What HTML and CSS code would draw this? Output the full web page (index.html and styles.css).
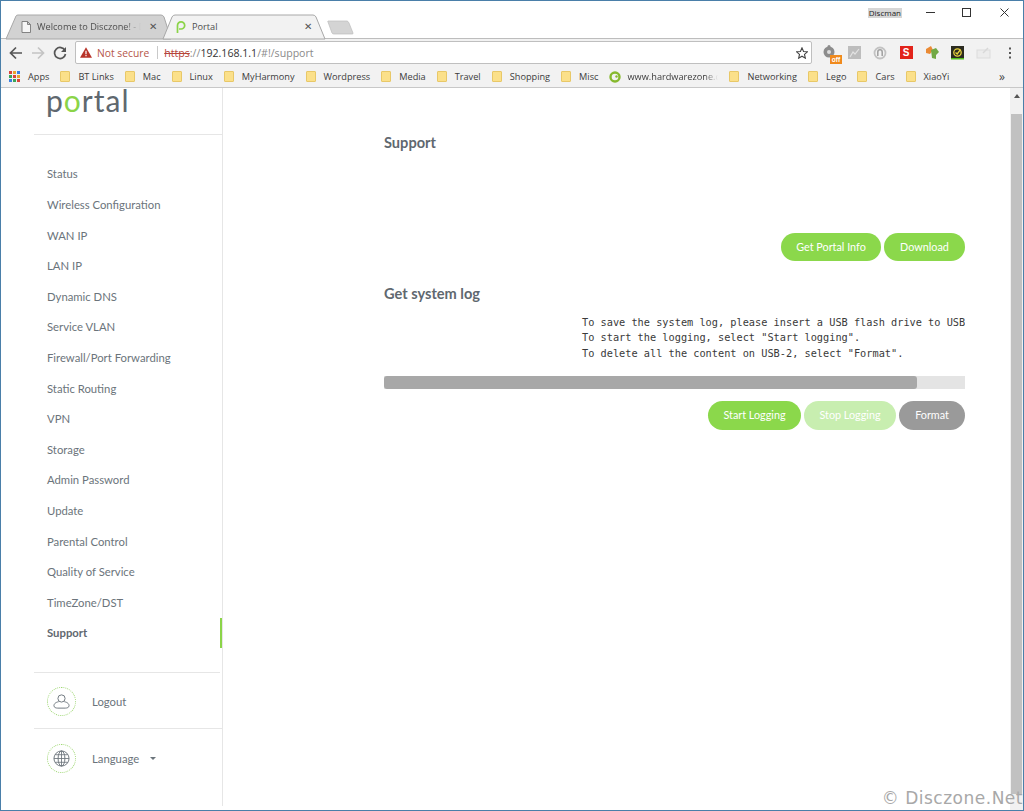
FILE: index.html
```html
<!DOCTYPE html>
<html lang="en">
<head>
<meta charset="utf-8">
<title>Portal</title>
<link rel="stylesheet" href="styles.css">
</head>
<body>
<div class="window">
  <header class="titlebar">
    <div class="tabs">
      <div class="tab tab-back">
        <svg class="tab-shape" viewBox="0 0 165 24" preserveAspectRatio="none"><path d="M0 24 L10 1 Q10.500 0 12 0 L155 0 Q157 0 158 2 L165 24 Z" fill="#d2d2d2" stroke="#a8a8a8"/></svg>
        <svg class="favicon" viewBox="0 0 10 12"><path d="M1 .5H6.500L9.500 3.500V11.500H1Z M6.500 .5V3.500H9.500" fill="#f6f6f6" stroke="#777" stroke-width=".9"/></svg>
        <span class="tab-title fade">Welcome to Disczone! - Di</span>
        <span class="tab-close">✕</span>
      </div>
      <div class="tab tab-front">
        <svg class="tab-shape" viewBox="0 0 163 24" preserveAspectRatio="none"><path d="M0 24 L9 2 Q10 0 12 0 L150 0 Q152 0 153 2 L162 24 Z" fill="#f2f2f2" stroke="#a8a8a8"/></svg>
        <svg class="favicon favicon-p" viewBox="0 0 12 14"><path d="M2.500 13V5.500A3.600 3.600 0 1 1 6 9H4" fill="none" stroke="#8bd448" stroke-width="1.700"/></svg>
        <span class="tab-title">Portal</span>
        <span class="tab-close">✕</span>
      </div>
      <svg class="newtab" viewBox="0 0 27 15"><path d="M1 1H20Q21 1 22 3L26 13Q26.500 14 25 14H7Q5.500 14 5 13L1 2Q.5 1 1 1Z" fill="#d4d4d4" stroke="#bbb" stroke-width=".7"/></svg>
    </div>
    <div class="winctl">
      <span class="profile">Discman</span>
      <svg class="wc wc-min" viewBox="0 0 9 9"><path d="M0 4.500H9" stroke="#333" stroke-width="1"/></svg>
      <svg class="wc wc-max" viewBox="0 0 9 9"><rect x=".5" y=".5" width="8" height="8" fill="none" stroke="#333"/></svg>
      <svg class="wc wc-close" viewBox="0 0 9 9"><path d="M.5 .5L8.500 8.500M8.500 .5L.5 8.500" stroke="#333" stroke-width="1"/></svg>
    </div>
  </header>

  <div class="toolbar">
    <svg class="nav-ic" viewBox="0 0 14 14"><path d="M13 7H2M7 1.500L1.500 7L7 12.500" fill="none" stroke="#555" stroke-width="1.700"/></svg>
    <svg class="nav-ic" viewBox="0 0 14 14"><path d="M1 7H12M7 1.500L12.500 7L7 12.500" fill="none" stroke="#c4c4c4" stroke-width="1.700"/></svg>
    <svg class="nav-ic" viewBox="0 0 14 14"><path d="M12 4.500A5.500 5.500 0 1 0 12.500 8" fill="none" stroke="#555" stroke-width="1.700"/><path d="M13 1V6H8Z" fill="#555"/></svg>
    <div class="omnibox">
      <svg class="warn" viewBox="0 0 14 12"><path d="M7 0L14 12H0Z" fill="#b8342a"/><path d="M6.300 4H7.700V8H6.300ZM6.300 9H7.700V10.400H6.300Z" fill="#fff"/></svg>
      <span class="notsecure">Not secure</span>
      <span class="sep"></span>
      <span class="url"><s class="https">https</s><span class="dim">://</span><span class="host">192.168.1.1</span><span class="dim">/#!/support</span></span>
      <svg class="star" viewBox="0 0 14 14"><path d="M7 1L8.800 5.200L13.300 5.600L9.900 8.600L10.900 13L7 10.700L3.100 13L4.100 8.600L.7 5.600L5.200 5.200Z" fill="none" stroke="#444" stroke-width="1.300"/></svg>
    </div>
    <div class="exts">
      <span class="ext">
        <svg viewBox="0 0 18 18"><circle cx="10" cy="8" r="5.500" fill="#8c8c8c"/><circle cx="10" cy="2.500" r="1.500" fill="#8c8c8c"/><circle cx="10" cy="8" r="2" fill="#ddd"/></svg>
        <span class="off-badge">off</span>
      </span>
      <span class="ext"><svg viewBox="0 0 18 18"><rect x="3" y="2" width="13" height="13" fill="#bdbdbd"/><path d="M5 13L8 8L10 10L14 5" fill="none" stroke="#e3e3e3" stroke-width="1.200"/></svg></span>
      <span class="ext"><svg viewBox="0 0 18 18"><circle cx="9" cy="9" r="5.500" fill="none" stroke="#c2c2c2" stroke-width="1.800"/><path d="M6.800 12V8A2.200 2.200 0 0 1 11.200 8V12" fill="none" stroke="#9f9f9f" stroke-width="1.500"/></svg></span>
      <span class="ext"><span class="ext-s">S</span></span>
      <span class="ext"><svg viewBox="0 0 18 18"><path d="M3 5L8 2L10 6L7 10L3 9Z" fill="#ea8a35"/><path d="M8 6L13 4L16 8L13 11L13 15L9 14Z" fill="#72a945"/></svg></span>
      <span class="ext"><svg viewBox="0 0 18 18"><rect x="2" y="2" width="13" height="13" fill="#2b2b20"/><rect x="2" y="14" width="13" height="1.500" fill="#52c01e"/><circle cx="8.500" cy="8.500" r="3.700" fill="none" stroke="#e8d23c" stroke-width="1.300"/><path d="M6.500 8.500L8.200 10L11.500 5.500" fill="none" stroke="#e8d23c" stroke-width="1.300"/></svg></span>
      <span class="ext"><svg viewBox="0 0 18 18"><rect x="2" y="6" width="13" height="8" fill="#ececec" stroke="#dcdcdc"/><path d="M8 9L13 4" stroke="#d8d8d8" stroke-width="1.500"/></svg></span>
      <span class="ext"><svg viewBox="0 0 18 18"><path d="M9 3.500V5.500M9 8V10M9 12.500V14.500" stroke="#555" stroke-width="2"/></svg></span>
    </div>
  </div>

  <div class="bookmarks">
    <span class="bm bm-apps">
      <svg class="apps-ic" viewBox="0 0 11 11"><rect width="3" height="3" fill="#d9453a"/><rect x="4" width="3" height="3" fill="#e9a52e"/><rect x="8" width="3" height="3" fill="#3c7fe0"/><rect y="4" width="3" height="3" fill="#3aa757"/><rect x="4" y="4" width="3" height="3" fill="#d9453a"/><rect x="8" y="4" width="3" height="3" fill="#e9a52e"/><rect y="8" width="3" height="3" fill="#3c7fe0"/><rect x="4" y="8" width="3" height="3" fill="#3aa757"/><rect x="8" y="8" width="3" height="3" fill="#d9453a"/></svg>
      Apps
    </span>
    <span class="bm"><i class="folder"></i>BT Links</span>
    <span class="bm"><i class="folder"></i>Mac</span>
    <span class="bm"><i class="folder"></i>Linux</span>
    <span class="bm"><i class="folder"></i>MyHarmony</span>
    <span class="bm"><i class="folder"></i>Wordpress</span>
    <span class="bm"><i class="folder"></i>Media</span>
    <span class="bm"><i class="folder"></i>Travel</span>
    <span class="bm"><i class="folder"></i>Shopping</span>
    <span class="bm"><i class="folder"></i>Misc</span>
    <span class="bm">
      <svg class="hz-ic" viewBox="0 0 12 12"><circle cx="6" cy="6" r="4.500" fill="none" stroke="#86b92e" stroke-width="2.400"/><circle cx="7.500" cy="5.500" r="1.200" fill="#86b92e"/></svg>
      <span class="bm-trunc fade">www.hardwarezone.com</span>
    </span>
    <span class="bm"><i class="folder"></i>Networking</span>
    <span class="bm"><i class="folder"></i>Lego</span>
    <span class="bm"><i class="folder"></i>Cars</span>
    <span class="bm"><i class="folder"></i>XiaoYi</span>
    <span class="bm-more">»</span>
  </div>

  <div class="page">
    <aside class="sidebar">
      <div class="logo">p<span class="logo-o">o</span>rtal</div>
      <nav class="menu">
        <a class="item">Status</a>
        <a class="item">Wireless Configuration</a>
        <a class="item">WAN IP</a>
        <a class="item">LAN IP</a>
        <a class="item">Dynamic DNS</a>
        <a class="item">Service VLAN</a>
        <a class="item">Firewall/Port Forwarding</a>
        <a class="item">Static Routing</a>
        <a class="item">VPN</a>
        <a class="item">Storage</a>
        <a class="item">Admin Password</a>
        <a class="item">Update</a>
        <a class="item">Parental Control</a>
        <a class="item">Quality of Service</a>
        <a class="item">TimeZone/DST</a>
        <a class="item active">Support</a>
      </nav>
      <div class="foot foot-logout">
        <span class="circle"><svg viewBox="0 0 18 16"><circle cx="9" cy="4.800" r="3.800" fill="none" stroke="#6b747b" stroke-width="1"/><path d="M6 8.200C2 9 1 11 1 12.500C1 14.300 3 15 5 15H13C15 15 17 14.300 17 12.500C17 11 16 9 12 8.200" fill="none" stroke="#6b747b" stroke-width="1"/></svg></span>
        <span>Logout</span>
      </div>
      <div class="foot foot-lang">
        <span class="circle"><svg viewBox="0 0 18 18"><circle cx="9" cy="9" r="8" fill="none" stroke="#6b747b"/><ellipse cx="9" cy="9" rx="3.600" ry="8" fill="none" stroke="#6b747b"/><path d="M1 9H17M2.200 5H15.800M2.200 13H15.800M9 1V17" stroke="#6b747b" stroke-width=".9"/></svg></span>
        <span>Language</span>
        <span class="caret"></span>
      </div>
    </aside>

    <main class="main">
      <h2 class="heading">Support</h2>
      <div class="btns btns-first">
        <button class="btn btn-info">Get Portal Info</button>
        <button class="btn btn-dl">Download</button>
      </div>
      <h2 class="heading heading-log">Get system log</h2>
      <pre class="log">To save the system log, please insert a USB flash drive to USB-2 port.
To start the logging, select "Start logging".
To delete all the content on USB-2, select "Format".</pre>
      <div class="progress"><div class="progress-fill"></div></div>
      <div class="btns btns-log">
        <button class="btn btn-start">Start Logging</button>
        <button class="btn btn-stop">Stop Logging</button>
        <button class="btn btn-format">Format</button>
      </div>
    </main>

    <div class="scrollbar">
      <span class="sb-up"></span>
      <div class="sb-thumb"></div>
    </div>
    <div class="watermark">© Disczone.Net</div>
  </div>
</div>
</body>
</html>
```

FILE: styles.css
```css
* { box-sizing: border-box; }
html, body { margin: 0; height: 100%; overflow: hidden; background: #fff; }
body { font-family: "Lato", "Liberation Sans", sans-serif; }

.window {
  width: 1024px;
  height: 811px;
  border: 1px solid #4a7fa9;
  display: flex;
  flex-direction: column;
  background: #fff;
}

/* Title bar */
.titlebar {
  height: 37px;
  flex: none;
  display: flex;
  justify-content: space-between;
  background: #fff;
  font-family: "Open Sans", "Liberation Sans", sans-serif;
}
.tabs {
  display: flex;
  align-items: flex-end;
  padding-left: 5px;
}
.tab {
  position: relative;
  height: 23px;
  display: flex;
  align-items: center;
  font-size: 9.200px;
  color: #555;
}
.tab-shape {
  position: absolute;
  left: 0;
  top: 0;
  width: 100%;
  height: 24px;
  overflow: visible;
}
.tab-back { width: 165px; padding-left: 15px; }
.tab-front { width: 163px; margin-left: -8px; padding-left: 12px; }
.favicon { position: relative; width: 10px; height: 12px; flex: none; margin-right: 6px; }
.favicon-p { width: 12px; height: 14px; margin-right: 5px; }
.tab-title {
  position: relative;
  flex: 1;
  white-space: nowrap;
  overflow: hidden;
  color: #4e4e4e;
}
.fade {
  -webkit-mask-image: linear-gradient(to right, #000 85%, transparent);
  mask-image: linear-gradient(to right, #000 85%, transparent);
}
.tab-close {
  position: relative;
  width: 10px;
  font-size: 10px;
  margin: 0 12px 0 8px;
  line-height: 1;
  color: #555;
  font-family: "DejaVu Sans", sans-serif;
}
.newtab { width: 27px; height: 15px; margin: 0 0 3px 1px; flex: none; }

.winctl {
  display: flex;
  align-items: flex-start;
  padding-top: 7px;
  padding-right: 14px;
}
.profile {
  font-size: 8px;
  line-height: 10px;
  padding: 0 1px;
  color: #222;
  background: #d6d6d6;
  margin-right: 24px;
}
.wc { width: 9px; height: 9px; flex: none; }
.wc-min { margin-right: 27px; }
.wc-max { margin-right: 29px; }

/* Toolbar */
.toolbar {
  height: 28px;
  flex: none;
  display: flex;
  align-items: center;
  background: #f2f2f2;
  border-top: 1px solid #bdbdbd;
  padding-left: 8px;
  font-family: "Open Sans", "Liberation Sans", sans-serif;
}
.nav-ic { width: 14px; height: 14px; flex: none; margin-right: 8px; }
.omnibox {
  width: 739px;
  height: 23px;
  display: flex;
  align-items: center;
  background: #fff;
  border: 1px solid #bfbfbf;
  border-radius: 2px;
  padding: 0 4px;
  font-size: 11px;
}
.warn { width: 12px; height: 11px; flex: none; margin-right: 5px; }
.notsecure { color: #b5564a; font-size: 10.300px; }
.sep { width: 1px; height: 13px; background: #c9c9c9; margin: 0 6px 0 8px; }
.url { flex: 1; white-space: nowrap; font-size: 10.600px; }
.https { color: #b5443a; }
.dim { color: #8a8a8a; }
.host { color: #333; }
.star { width: 12px; height: 12px; flex: none; margin-right: -1px; }
.exts {
  display: flex;
  margin-left: 3px;
}
.ext {
  position: relative;
  width: 26px;
  height: 22px;
  display: flex;
  align-items: center;
  justify-content: center;
}
.ext svg { width: 18px; height: 18px; }
.ext-s {
  width: 13px;
  height: 13px;
  background: #e2231a;
  color: #fff;
  font: 700 10px/13px "Liberation Sans", sans-serif;
  text-align: center;
}
.off-badge {
  position: absolute;
  right: -1px;
  bottom: 0;
  width: 12px;
  height: 9px;
  background: #f08a1d;
  color: #fff;
  font: 700 6.500px/9px "Liberation Sans", sans-serif;
  text-align: center;
}

/* Bookmarks */
.bookmarks {
  height: 22px;
  flex: none;
  display: flex;
  align-items: center;
  gap: 11px;
  padding-left: 8px;
  background: #f2f2f2;
  border-bottom: 1px solid #c8c8c8;
  font: 9.200px "Open Sans", "Liberation Sans", sans-serif;
  color: #3c3c3c;
  white-space: nowrap;
}
.bm { display: flex; align-items: center; flex: none; }
.apps-ic { width: 11px; height: 11px; margin-right: 8px; }
.hz-ic { width: 12px; height: 12px; margin-right: 6px; }
.bm-trunc { display: block; width: 91px; overflow: hidden; }
.folder {
  width: 10px;
  height: 11px;
  margin-right: 8px;
  flex: none;
  display: block;
  background: #fbe08a;
  border: 1px solid #e8c868;
  border-radius: 1px;
}
.bm-more {
  margin-left: auto;
  margin-right: 18px;
  font-size: 12px;
  color: #444;
}

/* Page */
.page {
  flex: 1;
  min-height: 0;
  display: flex;
  position: relative;
}
.sidebar {
  width: 222px;
  flex: none;
  padding-left: 33px;
  border-right: 1px solid #e6e6e6;
  margin-bottom: 4px;
  color: #6b747b;
  font-size: 11.300px;
}
.logo {
  height: 47px;
  border-bottom: 1px solid #e6e6e6;
  padding-left: 12px;
  font-size: 30px;
  line-height: 25px;
  letter-spacing: 1px;
  color: #5f686f;
  overflow: hidden;
}
.logo-o { color: #8bd448; }
.menu { padding-top: 23.700px; padding-bottom: 23.500px; }
.item {
  display: flex;
  align-items: center;
  height: 30.600px;
  padding-left: 13px;
  position: relative;
}
.item.active { font-weight: 700; color: #5f686f; }
.item.active::after {
  content: "";
  position: absolute;
  right: 0;
  top: 0;
  width: 2px;
  height: 100%;
  background: #8bd448;
}
.foot {
  display: flex;
  align-items: center;
  height: 57px;
  border-top: 1px solid #e6e6e6;
  padding: 2px 0 0 13px;
}
.foot-logout { height: 56px; margin-right: 2px; }
.foot-lang { padding-top: 3px; }
.circle {
  width: 29px;
  height: 29px;
  margin-right: 16px;
  flex: none;
  border: 1px dotted #9fd774;
  border-radius: 50%;
  display: flex;
  align-items: center;
  justify-content: center;
}
.circle svg { width: 17px; height: 17px; }
.caret {
  width: 0;
  height: 0;
  margin-left: 11px;
  border-left: 3.500px solid transparent;
  border-right: 3.500px solid transparent;
  border-top: 3.500px solid #6b747b;
}

/* Main */
.main {
  flex: 1;
  min-width: 0;
  padding: 45px 45px 0 161px;
  color: #5f686f;
}
.heading {
  margin: 0;
  height: 20px;
  font-size: 14.600px;
  line-height: 20px;
  font-weight: 700;
  color: #5f686f;
}
.heading-log { margin-top: 23px; }
.btns {
  display: flex;
  justify-content: flex-end;
  gap: 3px;
}
.btns-first { margin-top: 80px; }
.btns-log { margin-top: 12px; }
.btn {
  height: 28px;
  border: 0;
  border-radius: 14px;
  color: #fff;
  font: 10.800px "Lato", "Liberation Sans", sans-serif;
  padding: 0 0 1px;
}
.btn-info { width: 100px; background: #8bd84b; }
.btn-dl { width: 81px; background: #8bd84b; }
.btn-start { width: 93px; background: #8bd84b; height: 29px; border-radius: 15px; }
.btn-stop { width: 92px; background: #c8eeb0; height: 29px; border-radius: 15px; }
.btn-format { width: 66px; background: #9a9a9a; height: 29px; border-radius: 15px; }
.log {
  margin: 11px 0 0;
  padding-left: 198px;
  overflow: hidden;
  font: 10.280px/15.400px "DejaVu Sans Mono", "Liberation Mono", monospace;
  color: #3a3a3a;
}
.progress {
  margin-top: 14.500px;
  height: 13px;
  background: #e4e4e4;
}
.progress-fill {
  width: 91.800%;
  height: 100%;
  background: #a8a8a8;
  border-radius: 3px;
}

/* Scrollbar */
.scrollbar {
  width: 13px;
  flex: none;
  background: #f1f1f1;
  display: flex;
  flex-direction: column;
  align-items: center;
  padding-top: 6px;
}
.sb-up {
  width: 0;
  height: 0;
  border-left: 3.500px solid transparent;
  border-right: 3.500px solid transparent;
  border-bottom: 4px solid #555;
}
.sb-thumb {
  width: 11px;
  height: 680px;
  margin-top: 16px;
  background: #c1c1c1;
}
.watermark {
  position: absolute;
  right: 0;
  bottom: 2px;
  font: 17px "DejaVu Sans", sans-serif;
  letter-spacing: .5px;
  color: #a8a8a8;
  white-space: nowrap;
}
```
